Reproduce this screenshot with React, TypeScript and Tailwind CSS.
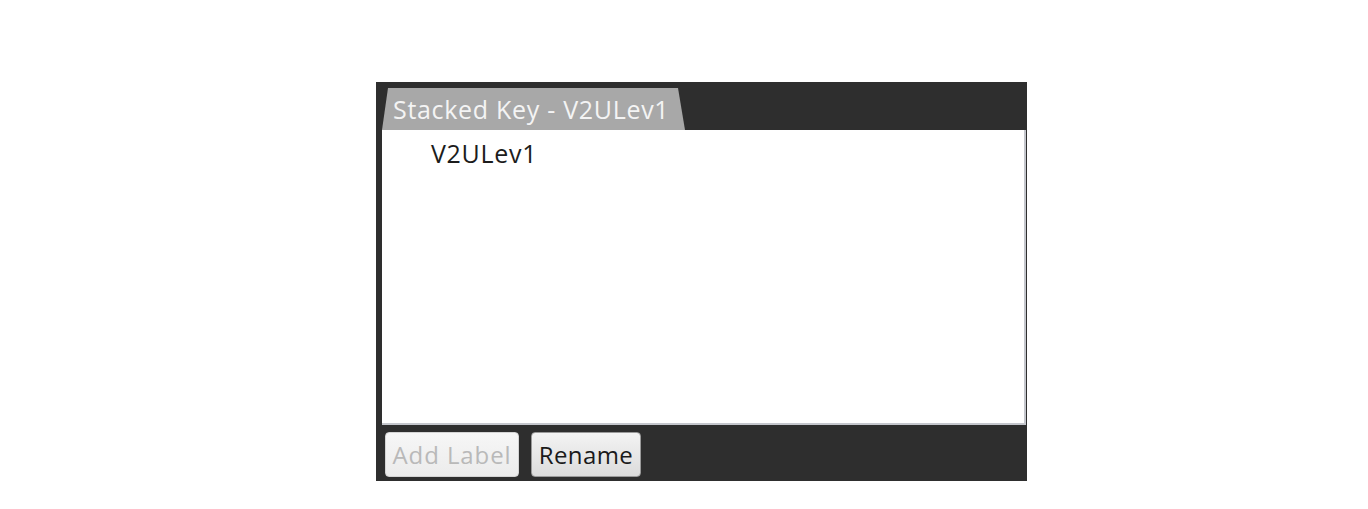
export default function App() {
  const font = { fontFamily: '"Open Sans", "Noto Sans", sans-serif' };

  return (
    <div className="min-h-[509px] w-[1368px] bg-white" style={font}>
      <div className="ml-[376px] pt-[82px]">
        <div className="flex h-[399px] w-[651px] flex-col bg-[#2e2e2e] pl-[6px] pr-[1px]">
          {/* tab strip */}
          <div className="flex h-[48px] items-end">
            <div className="flex h-[42px] w-[303px] items-center bg-[#a8a8a8] pl-[11px] [clip-path:polygon(6px_0,296px_0,303px_100%,0_100%)]">
              <span className="whitespace-nowrap text-[25px] leading-none tracking-[0.7px] text-[#f4f4f4]">
                Stacked Key - V2ULev1
              </span>
            </div>
          </div>

          {/* list */}
          <div className="h-[295px] border-r-2 border-b-2 border-[#c4c6cc] bg-white pl-[49px] pt-[8px]">
            <div className="text-[25px] leading-[30px] tracking-[0.7px] text-[#1c1c1c]">V2ULev1</div>
          </div>

          {/* buttons */}
          <div className="flex gap-[12px] pl-[3px] pt-[7px]">
            <button
              disabled
              className="h-[45px] w-[134px] rounded-[4px] border border-[#d4d4d4] bg-gradient-to-b from-[#f6f6f6] to-[#ececec] text-[24px] tracking-[0.9px] text-[#b9b9b9] whitespace-nowrap"
            >
              Add Label
            </button>
            <button className="h-[45px] w-[110px] rounded-[4px] border border-[#9a9a9a] bg-gradient-to-b from-[#f3f3f3] to-[#dcdcdc] text-[24px] tracking-[0.4px] text-[#1a1a1a]">
              Rename
            </button>
          </div>
        </div>
      </div>
    </div>
  );
}
